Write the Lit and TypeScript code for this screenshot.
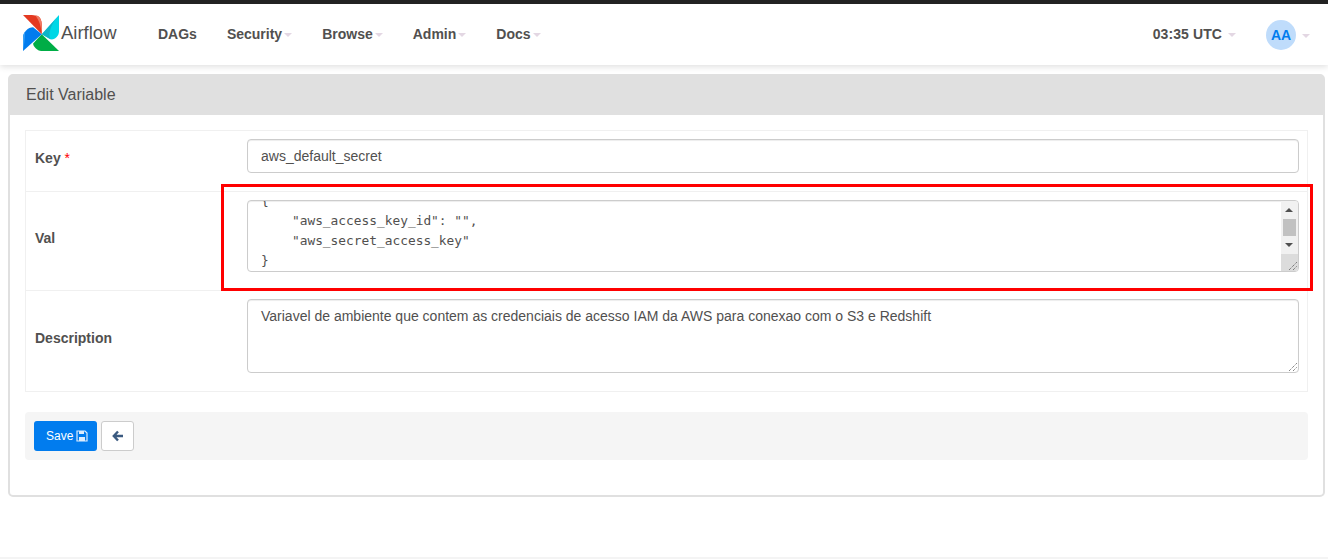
import { LitElement, html, css, svg } from "lit";
import { customElement } from "lit/decorators.js";

@customElement("app-root")
export class AppRoot extends LitElement {
  static styles = css`
    :host { display: block; position: relative; height: 559px; overflow: hidden; background: #fff; font-family: "Liberation Sans", Arial, sans-serif; font-size: 14px; color: #51504f; }
    * { box-sizing: border-box; }
    .nav { height: 65px; border-top: 4px solid #222; background: #fff; box-shadow: 0 2px 6px rgba(0,0,0,.12); display: flex; align-items: center; padding: 0 18px 0 23px; }
    .brand { display: flex; align-items: center; width: 135px; height: 100%; }
    .brand svg { display: block; flex: none; margin-top: -4px; }
    .brand span { font-size: 18.5px; color: #51504f; margin: -3px 0 0 2px; }
    .menu { display: flex; align-items: center; gap: 30px; flex: 1; font-weight: 700; margin-top: -2px; }
    .item { display: inline-flex; align-items: center; white-space: nowrap; }
    .caret { width: 0; height: 0; margin-left: 2px; margin-top: 2px; border-left: 4px solid transparent; border-right: 4px solid transparent; border-top: 4px solid #e3d7e3; }
    .time { font-weight: 700; margin-right: 30px; margin-top: -2px; letter-spacing: .1px; }
    .time .caret { margin-left: 6px; }
    .avatar { width: 30px; height: 30px; border-radius: 50%; background: #bfdcfb; color: #017cee; font-weight: 700; font-size: 14px; display: flex; align-items: center; justify-content: center; }
    .user .caret { margin-left: 6px; }
    .main { padding: 9px 3px 0 8px; }
    .panel { height: 423px; border: 2px solid #e0e0e0; border-radius: 5px; }
    .head { height: 39px; background: #e0e0e0; font-size: 16px; padding: 9px 0 0 16px; line-height: 20px; color: #51504f; }
    .body { padding: 15px 15px 0 15px; }
    .tbl { border: 1px solid #f0f0f0; }
    .row { display: grid; grid-template-columns: 221px 1fr; padding: 8px 8px 18px 0; border-top: 1px solid #f0f0f0; align-items: start; }
    .row:first-child { border-top: 0; }
    .lab { font-weight: 700; padding-left: 9px; color: #51504f; align-self: center; margin-top: 4px; }
    .req { color: #f00; font-weight: 400; }
    .input, .area { border: 1px solid #ccc; border-radius: 4px; box-shadow: inset 0 1px 1px rgba(0,0,0,.075); padding: 6px 13px; line-height: 20px; color: #51504f; font-size: 14px; }
    .input { height: 34px; }
    .desc { height: 74px; position: relative; }
    .code { height: 72px; position: relative; overflow: hidden; padding: 0; font-family: "DejaVu Sans Mono", monospace; font-size: 12.85px; }
    .code pre { margin: 0; font: inherit; line-height: 20px; position: absolute; left: 13px; top: -10px; color: #51504f; }
    .bar { position: absolute; right: 0; top: 0; bottom: 0; width: 17px; background: #f1f1f1; }
    .thumb { position: absolute; left: 2px; right: 2px; top: 18px; height: 17px; background: #c1c1c1; }
    .arr { position: absolute; left: 4px; width: 0; height: 0; border-left: 4px solid transparent; border-right: 4px solid transparent; }
    .arr.up { top: 7px; border-bottom: 4px solid #505050; }
    .arr.dn { top: 42px; border-top: 4px solid #505050; }
    .corner { position: absolute; right: 0; bottom: 0; width: 17px; height: 17px; background: #dcdcdc; }
    .grip { position: absolute; right: 0; bottom: 0; display: block; }
    .well { margin-top: 20px; height: 48px; background: #f5f5f5; border-radius: 4px; padding: 9px; display: flex; gap: 4px; }
    .btn { height: 30px; border-radius: 3px; font-size: 12px; display: flex; align-items: center; justify-content: center; }
    .save { width: 63px; background: #017cee; color: #fff; gap: 3px; padding-left: 12px; justify-content: flex-start; }
    .back { width: 33px; background: #fff; border: 1px solid #ccc; }
    .foot { position: absolute; left: 0; right: 0; bottom: 0; height: 2px; background: #f4f4f4; }
    .mark { position: absolute; left: 221px; top: 184px; width: 1092px; height: 107px; border: 3px solid #f00; }
  `;

  private grip() {
    return html`<svg class="grip" width="14" height="14" viewBox="0 0 14 14">
      <path d="M5 13 13 5M9 13 13 9" stroke="#555" stroke-width="1" stroke-dasharray="1 1" fill="none" />
    </svg>`;
  }

  render() {
    return html`
      <div class="nav">
        <div class="brand">
          <svg width="36" height="36" viewBox="0 0 35.5 35.5">
            ${svg`
              <path d="M0 0C6-.5 13 0 16 2 19 5 19 12 18.5 19Z" fill="#e43921" />
              <path d="M12 .3C14 .5 15 1 16 2 19 5 19 12 18.5 19 18 12 16 5 12 .3Z" fill="#ef7a63" />
              <path d="M35.5 0V16C35.5 21 31 25 27 24L18.5 19Z" fill="#00d7e6" />
              <path d="M35.5 0 18.5 19 27 24C24 17 29 7 35.5 0Z" fill="#11a8bd" opacity=".75" />
              <path d="M35.5 35.5H18C14 35 10 31 10 28L18.5 19Z" fill="#00ad46" />
              <path d="M0 35.5V22C0 17 5 12 10 12L18.5 19Z" fill="#017cee" />
              <path d="M0 35.5V22C0 20 .8 18 2 16.5 2 23 1 30 0 35.5Z" fill="#37a0f5" />
            `}
          </svg>
          <span>Airflow</span>
        </div>
        <div class="menu">
          <span class="item">DAGs</span>
          <span class="item">Security<i class="caret"></i></span>
          <span class="item">Browse<i class="caret"></i></span>
          <span class="item">Admin<i class="caret"></i></span>
          <span class="item">Docs<i class="caret"></i></span>
        </div>
        <span class="item time">03:35 UTC<i class="caret"></i></span>
        <span class="item user"><span class="avatar">AA</span><i class="caret"></i></span>
      </div>
      <div class="main">
        <div class="panel">
          <div class="head">Edit Variable</div>
          <div class="body">
            <div class="tbl">
              <div class="row">
                <div class="lab">Key <span class="req">*</span></div>
                <div class="input">aws_default_secret</div>
              </div>
              <div class="row">
                <div class="lab">Val</div>
                <div class="area code">
                  <pre>{
    "aws_access_key_id": "",
    "aws_secret_access_key"
}</pre>
                  <div class="bar">
                    <i class="arr up"></i><i class="thumb"></i><i class="arr dn"></i>
                    <div class="corner">${this.grip()}</div>
                  </div>
                </div>
              </div>
              <div class="row">
                <div class="lab">Description</div>
                <div class="area desc">Variavel de ambiente que contem as credenciais de acesso IAM da AWS para conexao com o S3 e Redshift${this.grip()}</div>
              </div>
            </div>
            <div class="well">
              <div class="btn save">Save
                <svg width="12" height="12" viewBox="0 0 12 12"><path d="M1 1h8l2 2v8H1Z" fill="none" stroke="#dcecfd" stroke-width="1.2"/><path d="M3 1h5v3H3ZM3 7h6v4H3Z" fill="#dcecfd"/></svg>
              </div>
              <div class="btn back">
                <svg width="12" height="12" viewBox="0 0 12 12"><path d="M6 1.5 1.8 6 6 10.5M2 6h9" fill="none" stroke="#3b5a80" stroke-width="2.4"/></svg>
              </div>
            </div>
          </div>
        </div>
      </div>
      <div class="foot"></div>
      <div class="mark"></div>
    `;
  }
}
